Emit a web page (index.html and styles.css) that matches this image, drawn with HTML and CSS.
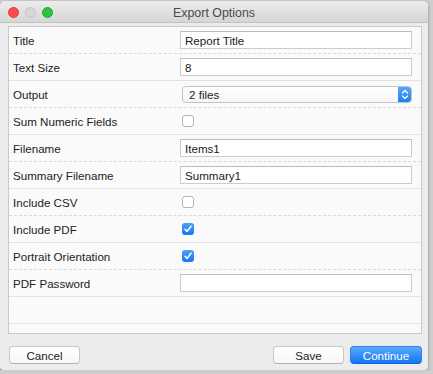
FILE: index.html
```html
<!DOCTYPE html>
<html lang="en">
<head>
    <meta charset="UTF-8">
    <meta name="viewport" content="width=device-width, initial-scale=1.0">
    <title>Export Options</title>
    <link rel="stylesheet" href="styles.css">
</head>
<body>
    <div class="window">
        <div class="titlebar">
            <div class="lights">
                <span class="light red"></span>
                <span class="light off"></span>
                <span class="light green"></span>
            </div>
            <div class="title">Export Options</div>
        </div>

        <!-- Tabla de opciones -->
        <div class="panel">
            <div class="row dashed">
                <label>Title</label>
                <div class="field">Report Title</div>
            </div>
            <div class="row">
                <label>Text Size</label>
                <div class="field">8</div>
            </div>
            <div class="row dashed">
                <label>Output</label>
                <div class="select">
                    <span>2 files</span>
                    <span class="stepper">
                        <svg viewBox="0 0 14 17" width="14" height="17" fill="none" stroke="#fff" stroke-width="1.3" stroke-linecap="round" stroke-linejoin="round"><path d="M4.5 7l2.5-2.5 2.5 2.5"/><path d="M4.5 10l2.5 2.5 2.5-2.5"/></svg>
                    </span>
                </div>
            </div>
            <div class="row">
                <label>Sum Numeric Fields</label>
                <span class="check"></span>
            </div>
            <div class="row dashed">
                <label>Filename</label>
                <div class="field">Items1</div>
            </div>
            <div class="row">
                <label>Summary Filename</label>
                <div class="field">Summary1</div>
            </div>
            <div class="row dashed">
                <label>Include CSV</label>
                <span class="check"></span>
            </div>
            <div class="row">
                <label>Include PDF</label>
                <span class="check on"><svg viewBox="0 0 12 12" width="12" height="12" fill="none" stroke="#fff" stroke-width="1.5" stroke-linecap="round" stroke-linejoin="round"><path d="M3 6.3l2 2.2 4-5.3"/></svg></span>
            </div>
            <div class="row dashed">
                <label>Portrait Orientation</label>
                <span class="check on"><svg viewBox="0 0 12 12" width="12" height="12" fill="none" stroke="#fff" stroke-width="1.5" stroke-linecap="round" stroke-linejoin="round"><path d="M3 6.3l2 2.2 4-5.3"/></svg></span>
            </div>
            <div class="row">
                <label>PDF Password</label>
                <div class="field"></div>
            </div>
            <div class="row"></div>
        </div>

        <div class="footer">
            <button class="btn">Cancel</button>
            <div class="right">
                <button class="btn">Save</button>
                <button class="btn primary">Continue</button>
            </div>
        </div>
    </div>
</body>
</html>
```

FILE: styles.css
```css
/* Ventana de opciones */
body {
    margin: 0;
    padding: 0;
    background-color: #cdcdcd;
    font-family: "Liberation Sans", Arial, sans-serif;
    font-size: 11.6px;
    color: #222;
}

.window {
    width: 428px;
    height: 369px;
    margin-top: 1px;
    background: #ececec;
    border-radius: 5px 5px 4px 4px;
    box-shadow: 0 1px 3px rgba(0, 0, 0, 0.35);
    overflow: hidden;
}

.titlebar {
    position: relative;
    height: 22px;
    background: linear-gradient(#ececec, #d6d6d6);
    border-bottom: 1px solid #c2c2c2;
    box-sizing: border-box;
}

.lights {
    display: flex;
    gap: 6px;
    padding: 6px 0 0 8px;
}

.light {
    width: 11px;
    height: 11px;
    border-radius: 50%;
    box-sizing: border-box;
}

.light.red {
    background: #fc4e4c;
    border: 1px solid #df3b39;
}

.light.off {
    background: #d7d7d7;
    border: 1px solid #c4c4c4;
}

.light.green {
    background: #2dc441;
    border: 1px solid #1faa31;
}

.title {
    position: absolute;
    top: 5px;
    left: 0;
    right: 0;
    text-align: center;
    font-size: 12.4px;
    color: #4a4a4a;
}

.panel {
    margin: 3px 6px 0 8px;
    height: 308px;
    box-sizing: border-box;
    background: #fafafa;
    border: 1px solid #c9c9c9;
    overflow: hidden;
}

.row {
    display: grid;
    grid-template-columns: 167px 1fr;
    align-items: center;
    height: 27px;
    box-sizing: border-box;
    padding: 0 9px 0 4px;
    border-bottom: 1px solid #e2e2e2;
}

.row.dashed {
    border-bottom: 1px dashed #d9d9d9;
}

.row label {
    padding-top: 1px;
}

.field {
    height: 18px;
    box-sizing: border-box;
    background: #fff;
    border: 1px solid #cbcbcb;
    border-top-color: #bdbdbd;
    padding: 2px 0 0 4px;
    line-height: 14px;
}

.select {
    display: flex;
    justify-content: space-between;
    align-items: center;
    height: 17px;
    margin-left: 2px;
    box-sizing: border-box;
    background: linear-gradient(#ffffff, #f6f6f6);
    border: 1px solid #c4c4c4;
    border-radius: 4px;
    padding-left: 6px;
    overflow: hidden;
}

.stepper {
    display: flex;
    width: 14px;
    height: 17px;
    margin-right: -1px;
    background: linear-gradient(#5aa8fc, #1a7cf6);
}

.check {
    display: block;
    width: 12px;
    height: 12px;
    margin-left: 2px;
    box-sizing: border-box;
    background: #fff;
    border: 1px solid #b4b4b4;
    border-radius: 3px;
}

.check.on {
    background: linear-gradient(#4ba0fc, #1677f4);
    border: none;
}

.check svg {
    display: block;
}

.footer {
    display: flex;
    justify-content: space-between;
    padding: 12px 6px 0 9px;
}

.right {
    display: flex;
    gap: 6px;
}

.btn {
    width: 71px;
    height: 18px;
    padding: 0;
    font-family: inherit;
    font-size: 11.6px;
    color: #222;
    background: linear-gradient(#ffffff, #f7f7f7);
    border: 1px solid #c8c8c8;
    border-bottom-color: #b2b2b2;
    border-radius: 4px;
}

.btn.primary {
    width: 72px;
    color: #fff;
    background: linear-gradient(#5aa9fd, #1376f5);
    border-color: #2a82f0;
    border-bottom-color: #0f62d8;
}
```
